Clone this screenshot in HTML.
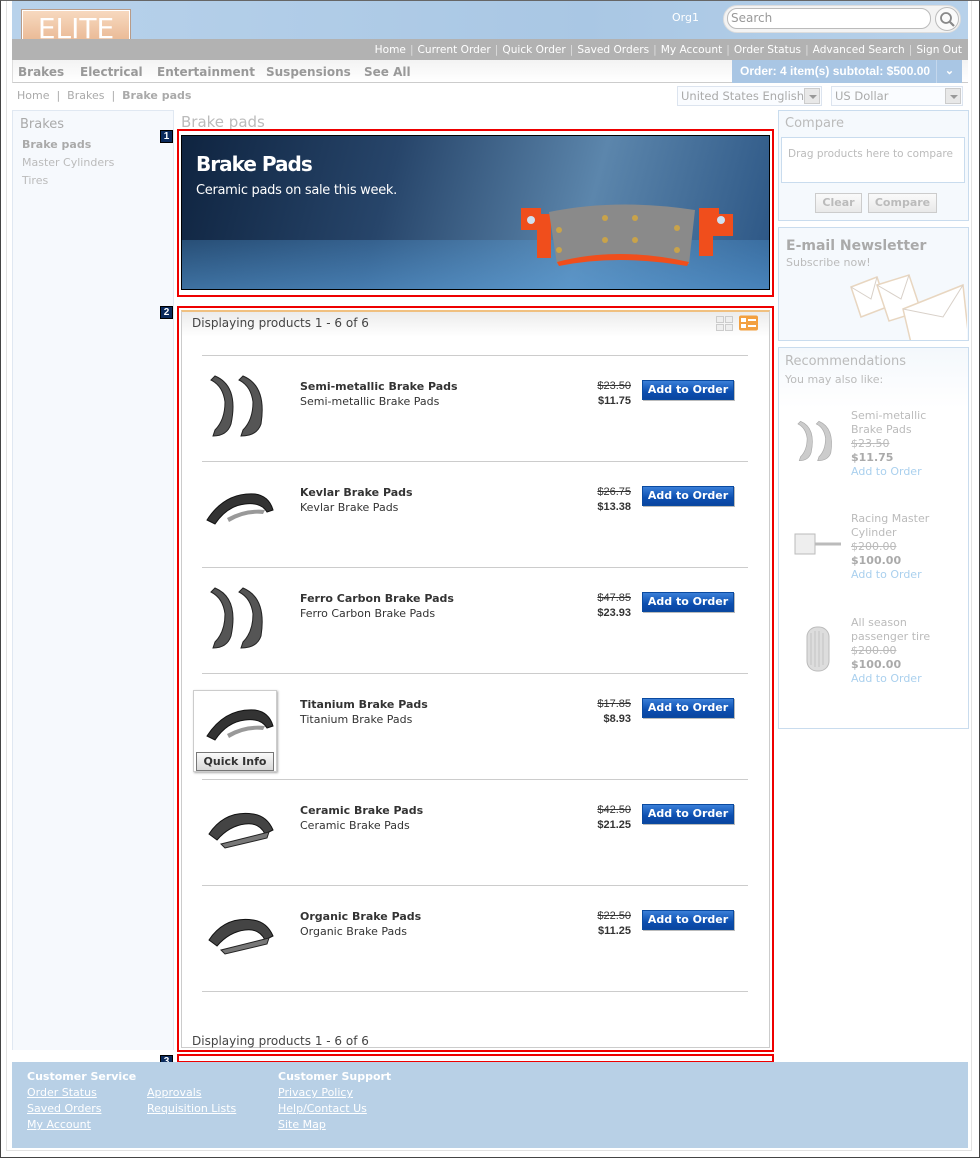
<!DOCTYPE html>
<html><head><meta charset="utf-8"><style>
*{margin:0;padding:0;box-sizing:border-box}
body{width:980px;height:1158px;position:relative;background:#fff;font-family:Verdana,"DejaVu Sans",sans-serif;font-size:11px;color:#333;overflow:hidden}
.a{position:absolute}
.frame{left:0;top:0;width:980px;height:1158px;border:1px solid #444;border-top-color:#666}
.inner{left:6px;top:1px;width:966px;height:1150px;border-left:1px solid #e2e2e2;border-right:1px solid #e2e2e2;border-bottom:1px solid #e2e2e2}
.hdr{left:12px;top:1px;width:956px;height:38px;background:linear-gradient(90deg,#b8d2eb,#a9c7e4 60%,#b7d1ea)}
.logo{left:22px;top:10px;width:108px;height:37px;background:linear-gradient(#f7d9bf,#e8b48e);border:1px solid #fff;outline:1px solid #b89b88;color:#fff;font-family:"DejaVu Sans",sans-serif;font-size:28px;text-align:center;line-height:35px;overflow:hidden}
.gbar{left:12px;top:39px;width:956px;height:21px;background:#b2b2b2;color:#fff;font-size:10.6px;text-align:right;padding-right:6px;line-height:22px}
.gbar span{color:#ddd;margin:0 4px}
.nav{left:12px;top:60px;width:956px;height:23px;background:linear-gradient(#f3f3f3,#fff);border-bottom:1px solid #ccc;border-left:1px solid #ddd}
.nav b{position:absolute;font-size:12px;color:#999;top:5px}
.order{left:732px;top:60px;width:230px;height:23px;background:#a9c6e4;color:#fff;font-family:"Liberation Sans",sans-serif;font-weight:bold;font-size:12px;line-height:23px;padding-left:8px;white-space:nowrap}
.order i{position:absolute;right:0;top:0;width:26px;height:23px;border-left:1px solid #c4d7ec;background:#a9c6e4;font-style:normal;text-align:center;font-size:11px}
.search{left:723px;top:5px;width:238px;height:28px;border-radius:14px;background:#f3f3f3;border:1px solid #ddd}
.sbox{left:727px;top:8px;width:204px;height:21px;border-radius:10px;background:#fff;border:1px solid #bbb;color:#999;font-size:12px;padding-left:3px;line-height:19px}
.sbtn{left:935px;top:7px;width:24px;height:24px;border-radius:50%;border:1px solid #bbb;background:#fafafa}
.sel{top:86px;height:20px;border:1px solid #dce4ef;color:#aaa;font-size:11.5px;line-height:19px;padding-left:3px;background:#fafcff;overflow:hidden;white-space:nowrap}
.sel i{position:absolute;right:1px;top:1px;width:16px;height:16px;background:#e8e8e8;border:1px solid #ccc}
.sel i:after{content:"";position:absolute;left:4px;top:6px;border:4px solid transparent;border-top-color:#999}
.crumb{left:17px;top:89px;color:#aaa;font-size:11px}
.side{left:12px;top:110px;width:162px;height:940px;background:#f6f9fd;border:1px solid #e0e8f2;border-bottom:none}
.badge{left:160px;width:13px;height:13px;background:#0a2a5c;border:1px solid #000;color:#fff;font-size:10px;font-weight:bold;text-align:center;line-height:11px;font-family:"Liberation Sans",sans-serif}
.red{left:177px;width:597px;border:2px solid #e00}
.pbox{background:#f5f9fd;border:1px solid #c9dcee}
.row{left:202px;width:546px;border-top:1px solid #ccc}
.pname{left:300px;font-weight:bold;font-size:11px}
.pdesc{left:300px;font-size:11px}
.old{left:560px;width:71px;text-align:right;text-decoration:line-through;font-family:"Liberation Sans",sans-serif;font-size:11px;color:#333}
.new{left:560px;width:71px;text-align:right;font-weight:bold;font-family:"Liberation Sans",sans-serif;font-size:11px}
.btn{left:642px;width:92px;height:20px;background:linear-gradient(#3a7fd8,#0c4fb0 60%,#0a45a0);border:1px solid #0a4aa0;color:#fff;font-weight:bold;font-size:11px;text-align:center;line-height:18px;box-shadow:1px 1px 0 #bbb}
.rec{color:#bbb;font-size:11px;line-height:14px}
.foot{left:12px;top:1062px;width:956px;height:86px;background:#b8d0e6;color:#fff}
.foot a{position:absolute;color:#fff;text-decoration:underline;font-size:11px}
.foot b{position:absolute;font-size:11px}
.graybtn{top:193px;height:20px;border:1px solid #ccc;background:linear-gradient(#fafafa,#e9e9e9);color:#bbb;font-weight:bold;font-size:11px;text-align:center;line-height:18px}
</style></head><body>
<div class="a frame"></div>
<div class="a inner"></div>
<div class="a hdr"></div>
<div class="a logo">ELITE</div>
<div class="a" style="left:672px;top:11px;color:#fff;font-size:11px">Org1</div>
<div class="a search"></div>
<div class="a sbox">Search</div>
<div class="a sbtn"><svg width="22" height="22" viewBox="0 0 22 22"><circle cx="10" cy="10" r="5" fill="none" stroke="#888" stroke-width="1.8"/><path d="M14 14l4 4" stroke="#888" stroke-width="2.2"/></svg></div>
<div class="a gbar">Home<span>|</span>Current Order<span>|</span>Quick Order<span>|</span>Saved Orders<span>|</span>My Account<span>|</span>Order Status<span>|</span>Advanced Search<span>|</span>Sign Out</div>
<div class="a nav"><b style="left:5px">Brakes</b><b style="left:67px">Electrical</b><b style="left:144px">Entertainment</b><b style="left:253px">Suspensions</b><b style="left:351px">See All</b></div>
<div class="a order">Order: 4 item(s) subtotal: $500.00<i>&#8964;</i></div>
<div class="a crumb">Home &nbsp;|&nbsp; Brakes &nbsp;|&nbsp; <b>Brake pads</b></div>
<div class="a sel" style="left:677px;width:145px">United States English<i></i></div>
<div class="a sel" style="left:831px;width:132px">US Dollar<i></i></div>

<div class="a side"></div>
<div class="a" style="left:20px;top:117px;color:#aaa;font-size:13px">Brakes</div>
<div class="a" style="left:22px;top:138px;color:#aaa;font-size:11px;font-weight:bold">Brake pads</div>
<div class="a" style="left:22px;top:156px;color:#bbb;font-size:11px">Master Cylinders</div>
<div class="a" style="left:22px;top:174px;color:#bbb;font-size:11px">Tires</div>

<div class="a" style="left:181px;top:113px;color:#bbb;font-size:15px">Brake pads</div>
<div class="a badge" style="top:130px">1</div>
<div class="a red" style="top:129px;height:168px"></div>
<div class="a" style="left:181px;top:135px;width:589px;height:155px;border:1px solid #000;background:linear-gradient(180deg,rgba(0,0,0,0) 0%,rgba(0,0,0,0) 68%,rgba(80,150,210,.35) 68%,rgba(90,160,220,.6) 100%),linear-gradient(105deg,#0f2440 0%,#27456a 35%,#5c86ac 68%,#2b5584 100%);overflow:hidden">
<div class="a" style="left:14px;top:16px;color:#fff;font-family:'DejaVu Sans',sans-serif;font-size:20px;font-weight:bold;letter-spacing:-1px">Brake Pads</div>
<div class="a" style="left:14px;top:47px;color:#fff;font-family:'DejaVu Sans',sans-serif;font-size:13px;letter-spacing:-.3px">Ceramic pads on sale this week.</div>
<svg class="a" style="left:335px;top:64px" width="220" height="90" viewBox="0 0 220 90"><path d="M4 8h20v6h10v44H20V30H4z M182 8h20v6h14v22H196v20h-14z" fill="#f04e1c"/><circle cx="14" cy="20" r="4" fill="#cfe0f0"/><circle cx="204" cy="20" r="4" fill="#cfe0f0"/><path d="M32 12 Q100 -2 178 10 L172 64 Q100 50 40 64 Z" fill="#8a8a8a"/><path d="M40 62 Q100 46 172 62 L170 66 Q100 54 42 66Z" fill="#f04e1c"/><g fill="#c9a34a"><circle cx="42" cy="30" r="3"/><circle cx="88" cy="18" r="3"/><circle cx="118" cy="18" r="3"/><circle cx="160" cy="28" r="3"/><circle cx="88" cy="40" r="3"/><circle cx="118" cy="40" r="3"/><circle cx="42" cy="50" r="3"/><circle cx="160" cy="50" r="3"/></g></svg>
</div>

<div class="a badge" style="top:306px">2</div>
<div class="a red" style="top:306px;height:746px"></div>
<div class="a" style="left:181px;top:310px;width:589px;height:738px;border:1px solid #ccc;border-top:2px solid #f0c080;background:linear-gradient(#ececec,#fff 25px,#fff)"></div>
<div class="a" style="left:192px;top:316px;font-size:12px;color:#444">Displaying products 1 - 6 of 6</div>
<svg class="a" style="left:715px;top:315px" width="44" height="16" viewBox="0 0 44 16"><g fill="#eee" stroke="#ccc"><rect x="1.5" y="1.5" width="7" height="6"/><rect x="10.5" y="1.5" width="7" height="6"/><rect x="1.5" y="9.5" width="7" height="6"/><rect x="10.5" y="9.5" width="7" height="6"/></g><rect x="24" y="0.5" width="19" height="15" rx="2" fill="#f3a040"/><g fill="#fff"><rect x="26" y="3" width="5" height="4"/><rect x="33" y="4" width="8" height="2"/><rect x="26" y="9" width="5" height="4"/><rect x="33" y="10" width="8" height="2"/></g></svg>

<div class="a row" style="top:355px"></div>
<div class="a row" style="top:461px"></div>
<div class="a row" style="top:567px"></div>
<div class="a row" style="top:673px"></div>
<div class="a row" style="top:779px"></div>
<div class="a row" style="top:885px"></div>
<div class="a row" style="top:991px"></div>

<svg class="a" style="left:205px;top:372px" width="70" height="68" viewBox="0 0 70 68"><g fill="#555" stroke="#222"><path d="M10 4 Q34 14 26 52 Q22 64 8 64 L10 58 Q20 48 20 30 Q18 14 6 8Z"/><path d="M38 4 Q62 14 56 52 Q52 64 36 64 L38 58 Q48 48 48 30 Q46 14 34 8Z"/></g></svg>
<svg class="a" style="left:205px;top:484px" width="70" height="48" viewBox="0 0 70 48"><path d="M2 36 Q20 8 50 10 Q64 12 68 26 L62 28 Q56 18 40 20 Q22 22 10 40Z" fill="#333" stroke="#111"/><path d="M22 34 Q40 24 60 26 L58 30 Q40 28 24 38Z" fill="#999"/></svg>
<svg class="a" style="left:205px;top:584px" width="70" height="68" viewBox="0 0 70 68"><g fill="#555" stroke="#222"><path d="M10 4 Q34 14 26 52 Q22 64 8 64 L10 58 Q20 48 20 30 Q18 14 6 8Z"/><path d="M38 4 Q62 14 56 52 Q52 64 36 64 L38 58 Q48 48 48 30 Q46 14 34 8Z"/></g></svg>
<div class="a" style="left:193px;top:690px;width:84px;height:82px;border:1px solid #ccc;box-shadow:1px 1px 2px #aaa;background:#fff"></div>
<svg class="a" style="left:205px;top:700px" width="70" height="48" viewBox="0 0 70 48"><path d="M2 36 Q20 8 50 10 Q64 12 68 26 L62 28 Q56 18 40 20 Q22 22 10 40Z" fill="#333" stroke="#111"/><path d="M22 34 Q40 24 60 26 L58 30 Q40 28 24 38Z" fill="#999"/></svg>
<div class="a" style="left:196px;top:752px;width:78px;height:19px;border:1px solid #777;background:linear-gradient(#fafafa,#d8d8d8);font-weight:bold;font-size:11px;text-align:center;line-height:18px;color:#333">Quick Info</div>
<svg class="a" style="left:205px;top:804px" width="70" height="48" viewBox="0 0 70 48"><path d="M4 30 Q20 6 48 10 Q62 12 68 26 L60 30 Q54 18 40 20 Q24 22 12 36Z" fill="#444" stroke="#111"/><path d="M16 40 L64 28 L62 34 L20 44Z" fill="#777" stroke="#222"/></svg>
<svg class="a" style="left:205px;top:910px" width="70" height="48" viewBox="0 0 70 48"><path d="M4 30 Q20 6 48 10 Q62 12 68 26 L60 30 Q54 18 40 20 Q24 22 12 36Z" fill="#444" stroke="#111"/><path d="M16 40 L64 28 L62 34 L20 44Z" fill="#777" stroke="#222"/></svg>

<div class="a pname" style="top:380px">Semi-metallic Brake Pads</div><div class="a pdesc" style="top:395px">Semi-metallic Brake Pads</div>
<div class="a old" style="top:380px">$23.50</div><div class="a new" style="top:395px">$11.75</div><div class="a btn" style="top:380px">Add to Order</div>

<div class="a pname" style="top:486px">Kevlar Brake Pads</div><div class="a pdesc" style="top:501px">Kevlar Brake Pads</div>
<div class="a old" style="top:486px">$26.75</div><div class="a new" style="top:501px">$13.38</div><div class="a btn" style="top:486px">Add to Order</div>

<div class="a pname" style="top:592px">Ferro Carbon Brake Pads</div><div class="a pdesc" style="top:607px">Ferro Carbon Brake Pads</div>
<div class="a old" style="top:592px">$47.85</div><div class="a new" style="top:607px">$23.93</div><div class="a btn" style="top:592px">Add to Order</div>

<div class="a pname" style="top:698px">Titanium Brake Pads</div><div class="a pdesc" style="top:713px">Titanium Brake Pads</div>
<div class="a old" style="top:698px">$17.85</div><div class="a new" style="top:713px">$8.93</div><div class="a btn" style="top:698px">Add to Order</div>

<div class="a pname" style="top:804px">Ceramic Brake Pads</div><div class="a pdesc" style="top:819px">Ceramic Brake Pads</div>
<div class="a old" style="top:804px">$42.50</div><div class="a new" style="top:819px">$21.25</div><div class="a btn" style="top:804px">Add to Order</div>

<div class="a pname" style="top:910px">Organic Brake Pads</div><div class="a pdesc" style="top:925px">Organic Brake Pads</div>
<div class="a old" style="top:910px">$22.50</div><div class="a new" style="top:925px">$11.25</div><div class="a btn" style="top:910px">Add to Order</div>

<div class="a" style="left:192px;top:1034px;font-size:12px;color:#444">Displaying products 1 - 6 of 6</div>

<div class="a badge" style="top:1055px">3</div>
<div class="a red" style="top:1054px;height:9px"></div>

<div class="a pbox" style="left:778px;top:110px;width:191px;height:111px"></div>
<div class="a" style="left:785px;top:116px;color:#bbb;font-size:13px">Compare</div>
<div class="a" style="left:781px;top:137px;width:184px;height:46px;background:#fff;border:1px solid #c9dcee;color:#bbb;font-size:10.5px;padding:10px 0 0 6px;white-space:nowrap;overflow:hidden">Drag products here to compare</div>
<div class="a graybtn" style="left:815px;width:47px">Clear</div>
<div class="a graybtn" style="left:868px;width:69px">Compare</div>

<div class="a pbox" style="left:778px;top:227px;width:191px;height:114px;overflow:hidden">
<svg class="a" style="left:68px;top:45px" width="120" height="70" viewBox="0 0 120 70"><g fill="#fff" stroke="#e8d6c0" stroke-width="1.5"><path d="M4 14 L30 4 L40 34 L14 44Z"/><path d="M30 12 L62 2 L74 38 L42 48Z"/><path d="M56 36 L116 12 L122 68 L64 70Z"/></g><g fill="none" stroke="#d8d0c8"><path d="M4 14 L24 26 L30 4"/><path d="M30 12 L54 26 L62 2"/><path d="M56 36 L96 44 L116 12"/></g></svg>
</div>
<div class="a" style="left:786px;top:238px;color:#aaa;font-size:14px;font-weight:bold">E-mail Newsletter</div>
<div class="a" style="left:786px;top:256px;color:#bbb;font-size:11px">Subscribe now!</div>

<div class="a pbox" style="left:778px;top:347px;width:191px;height:382px;background:linear-gradient(#f4f8fc,#fff 60px)"></div>
<div class="a" style="left:785px;top:354px;color:#bbb;font-size:13px">Recommendations</div>
<div class="a" style="left:785px;top:373px;color:#bbb;font-size:11px">You may also like:</div>
<svg class="a" style="left:794px;top:415px" width="46" height="52" viewBox="0 0 70 68"><g fill="#ccc" stroke="#aaa"><path d="M10 4 Q34 14 26 52 Q22 64 8 64 L10 58 Q20 48 20 30 Q18 14 6 8Z"/><path d="M38 4 Q62 14 56 52 Q52 64 36 64 L38 58 Q48 48 48 30 Q46 14 34 8Z"/></g></svg>
<div class="a rec" style="left:851px;top:409px">Semi-metallic<br>Brake Pads<br><s>$23.50</s><br><b style="color:#aaa">$11.75</b><br><span style="color:#aad0ee">Add to Order</span></div>
<svg class="a" style="left:793px;top:530px" width="50" height="30" viewBox="0 0 50 30"><rect x="2" y="4" width="20" height="20" fill="#eee" stroke="#bbb"/><path d="M22 14 H48" stroke="#bbb" stroke-width="3"/></svg>
<div class="a rec" style="left:851px;top:512px">Racing Master<br>Cylinder<br><s>$200.00</s><br><b style="color:#aaa">$100.00</b><br><span style="color:#aad0ee">Add to Order</span></div>
<svg class="a" style="left:805px;top:625px" width="26" height="48" viewBox="0 0 26 48"><rect x="2" y="2" width="22" height="44" rx="10" fill="#ddd" stroke="#bbb"/><path d="M6 8v32M10 6v36M14 6v36M18 8v32" stroke="#c4c4c4"/></svg>
<div class="a rec" style="left:851px;top:616px">All season<br>passenger tire<br><s>$200.00</s><br><b style="color:#aaa">$100.00</b><br><span style="color:#aad0ee">Add to Order</span></div>

<div class="a foot">
<b style="left:15px;top:8px">Customer Service</b>
<a style="left:15px;top:24px">Order Status</a>
<a style="left:15px;top:40px">Saved Orders</a>
<a style="left:15px;top:56px">My Account</a>
<a style="left:135px;top:24px">Approvals</a>
<a style="left:135px;top:40px">Requisition Lists</a>
<b style="left:266px;top:8px">Customer Support</b>
<a style="left:266px;top:24px">Privacy Policy</a>
<a style="left:266px;top:40px">Help/Contact Us</a>
<a style="left:266px;top:56px">Site Map</a>
</div>
</body></html>
